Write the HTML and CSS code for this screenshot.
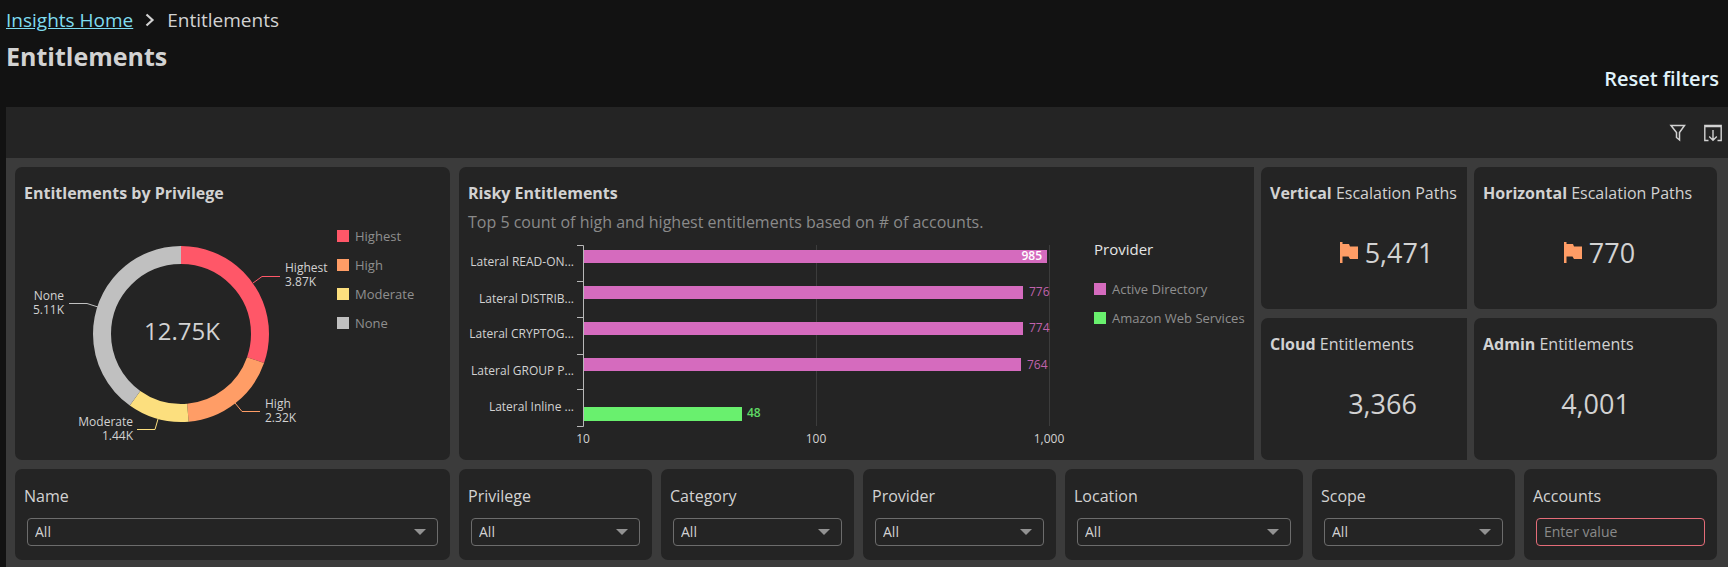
FILE: index.html
```html
<!DOCTYPE html>
<html lang="en">
<head>
<meta charset="utf-8">
<title>Entitlements</title>
<link rel="stylesheet" href="styles.css">
</head>
<body>
<header class="page-header">
  <nav class="breadcrumb" aria-label="Breadcrumb">
    <a class="breadcrumb-link" href="#">Insights Home</a>
    <svg class="breadcrumb-chevron" width="10" height="14" viewBox="0 0 10 14" aria-hidden="true"><path d="M1.5 1.5 7.5 7l-6 5.5" fill="none" stroke="currentColor" stroke-width="2.2"/></svg>
    <span>Entitlements</span>
  </nav>
  <h1 class="page-title">Entitlements</h1>
  <button class="reset" type="button">Reset filters</button>
</header>

<main class="report">
  <div class="toolbar">
    <button class="tool" type="button" aria-label="Filter">
      <svg width="18" height="18" viewBox="0 0 18 18" aria-hidden="true"><path d="M2 1.5h13.500L10.500 8.500v7.500L7.500 13.500v-5z" fill="none" stroke="currentColor" stroke-width="1.500"/></svg>
    </button>
    <button class="tool" type="button" aria-label="Export">
      <svg width="18" height="18" viewBox="0 0 18 18" aria-hidden="true"><path d="M4.500 16.500H.8V1.500h16.400v15h-3.700M.8 2.500h16.400M9 6v10M5.200 12.500 9 16.300l3.800-3.800" fill="none" stroke="currentColor" stroke-width="1.400"/></svg>
    </button>
  </div>

  <div class="canvas">
    <div class="row charts">
      <section class="card">
        <h2 class="card-title">Entitlements by Privilege</h2>
        <div class="donut-body">
          <svg class="donut" width="305" height="216" viewBox="0 0 305 216" role="img" aria-label="Entitlements by privilege">
            <g transform="rotate(-90 157 104)" fill="none" stroke-width="18">
              <circle cx="157" cy="104" r="79" pathLength="1274" stroke="#ff5768" stroke-dasharray="387 887"/>
              <circle cx="157" cy="104" r="79" pathLength="1274" stroke="#ff9d66" stroke-dasharray="232 1042" stroke-dashoffset="-387"/>
              <circle cx="157" cy="104" r="79" pathLength="1274" stroke="#fcdf7e" stroke-dasharray="144 1130" stroke-dashoffset="-619"/>
              <circle cx="157" cy="104" r="79" pathLength="1274" stroke="#c0c0c0" stroke-dasharray="511 763" stroke-dashoffset="-763"/>
            </g>
            <g class="leader">
              <path d="M229 53l9-6.500h18" stroke="#ff5768"/>
              <path d="M211 173l7 8.500h18" stroke="#ff9d66"/>
              <path d="M134 189l-3 10.500h-18" stroke="#fcdf7e"/>
              <path d="M74 77l-11-3.500H45" stroke="#c0c0c0"/>
            </g>
            <text class="donut-total" x="158" y="110" text-anchor="middle">12.75K</text>
            <g class="chart-label">
              <text x="261" y="42">Highest</text><text x="261" y="56">3.87K</text>
              <text x="241" y="178">High</text><text x="241" y="192">2.32K</text>
              <text x="109" y="196" text-anchor="end">Moderate</text><text x="109" y="210" text-anchor="end">1.44K</text>
              <text x="40" y="70" text-anchor="end">None</text><text x="40" y="84" text-anchor="end">5.11K</text>
            </g>
          </svg>
          <ul class="legend">
            <li class="legend-item"><span class="swatch highest"></span>Highest</li>
            <li class="legend-item"><span class="swatch high"></span>High</li>
            <li class="legend-item"><span class="swatch moderate"></span>Moderate</li>
            <li class="legend-item"><span class="swatch none"></span>None</li>
          </ul>
        </div>
      </section>

      <div class="metrics">
        <section class="card clipped">
          <h2 class="card-title">Risky Entitlements</h2>
          <p class="card-note">Top 5 count of high and highest entitlements based on # of accounts.</p>
          <div class="bars-body">
            <svg class="bars" width="606" height="206" viewBox="0 0 606 206" role="img" aria-label="Risky entitlements by number of accounts">
              <path d="M348.500 5v181M581.500 5v181" stroke="#3c3c3c"/>
              <g fill="#d56bbe">
                <rect x="116" y="10" width="463" height="13"/>
                <rect x="116" y="46" width="439" height="13"/>
                <rect x="116" y="82" width="439" height="13"/>
                <rect x="116" y="118" width="437" height="13"/>
              </g>
              <rect x="116" y="167" width="158" height="14" fill="#69f06e"/>
              <path d="M109 5.500h6.500v181H109M109 41.500h6M109 77.500h6M109 114.500h6M109 149.500h6" fill="none" stroke="#b8b8b8"/>
              <g class="chart-label" text-anchor="end">
                <text x="106" y="26">Lateral READ-ON...</text>
                <text x="106" y="63">Lateral DISTRIB...</text>
                <text x="106" y="98">Lateral CRYPTOG...</text>
                <text x="106" y="135">Lateral GROUP P...</text>
                <text x="106" y="171">Lateral Inline ...</text>
              </g>
              <g class="axis-label" text-anchor="middle">
                <text x="115" y="203">10</text><text x="348" y="203">100</text><text x="581" y="203">1,000</text>
              </g>
              <g class="bar-value">
                <text x="574" y="20" text-anchor="end" class="value-inside">985</text>
                <text x="561" y="56">776</text><text x="561" y="92">774</text><text x="559" y="129">764</text>
                <text x="279" y="177" class="value-aws">48</text>
              </g>
            </svg>
            <div class="provider-legend">
              <h3 class="legend-title">Provider</h3>
              <ul class="legend">
                <li class="legend-item"><span class="swatch ad"></span>Active Directory</li>
                <li class="legend-item"><span class="swatch aws"></span>Amazon Web Services</li>
              </ul>
            </div>
          </div>
        </section>

        <div class="kpi-column cut">
          <section class="card kpi clipped">
            <h2 class="kpi-title"><b>Vertical</b> Escalation Paths</h2>
            <p class="kpi-value"><svg class="flag" width="18" height="22" viewBox="0 0 18 22" aria-hidden="true"><path d="M0 0h2.500v2H9l1 2.500H18V17h-8l-1.500-2.500H2.500V21H0z" fill="#ff9d66"/></svg>5,471</p>
          </section>
          <section class="card kpi clipped">
            <h2 class="kpi-title"><b>Cloud</b> Entitlements</h2>
            <p class="kpi-value">3,366</p>
          </section>
        </div>
        <div class="kpi-column">
          <section class="card kpi">
            <h2 class="kpi-title"><b>Horizontal</b> Escalation Paths</h2>
            <p class="kpi-value"><svg class="flag" width="18" height="22" viewBox="0 0 18 22" aria-hidden="true"><path d="M0 0h2.500v2H9l1 2.500H18V17h-8l-1.500-2.500H2.500V21H0z" fill="#ff9d66"/></svg>770</p>
          </section>
          <section class="card kpi">
            <h2 class="kpi-title"><b>Admin</b> Entitlements</h2>
            <p class="kpi-value">4,001</p>
          </section>
        </div>
      </div>
    </div>

    <form class="row filters">
      <div class="card filter"><label class="filter-label" for="f-name">Name</label><div class="select-wrap"><select class="field" id="f-name"><option>All</option></select></div></div>
      <div class="card filter"><label class="filter-label" for="f-privilege">Privilege</label><div class="select-wrap"><select class="field" id="f-privilege"><option>All</option></select></div></div>
      <div class="card filter"><label class="filter-label" for="f-category">Category</label><div class="select-wrap"><select class="field" id="f-category"><option>All</option></select></div></div>
      <div class="card filter"><label class="filter-label" for="f-provider">Provider</label><div class="select-wrap"><select class="field" id="f-provider"><option>All</option></select></div></div>
      <div class="card filter"><label class="filter-label" for="f-location">Location</label><div class="select-wrap"><select class="field" id="f-location"><option>All</option></select></div></div>
      <div class="card filter"><label class="filter-label" for="f-scope">Scope</label><div class="select-wrap"><select class="field" id="f-scope"><option>All</option></select></div></div>
      <div class="card filter"><label class="filter-label" for="f-accounts">Accounts</label><input class="field invalid" id="f-accounts" type="text" placeholder="Enter value"></div>
    </form>
  </div>
</main>
</body>
</html>
```
FILE: styles.css
```css
* { box-sizing: border-box; }

body {
  margin: 0;
  background: #121212;
  color: #d2d2d2;
  font-family: "Open Sans", "Noto Sans", sans-serif;
}

h1, h2, h3, p, ul { margin: 0; padding: 0; }
ul { list-style: none; }

button {
  padding: 0;
  border: 0;
  background: none;
  color: inherit;
  font: inherit;
  cursor: pointer;
}

.page-header {
  display: flex;
  flex-direction: column;
  padding: 8px 9px 16px 6px;
}

.breadcrumb {
  display: flex;
  align-items: center;
  gap: 12px;
  font-size: 19px;
  line-height: 24px;
}
.breadcrumb-link { color: #7fdcf0; }

.page-title {
  margin-top: 8px;
  font-size: 25px;
  font-weight: 700;
  line-height: 32px;
}

.reset {
  align-self: flex-end;
  margin-top: -5px;
  color: #e0f3fb;
  font-size: 20px;
  font-weight: 600;
  line-height: 24px;
}

.report { margin-left: 6px; }

.toolbar {
  display: flex;
  align-items: center;
  justify-content: flex-end;
  gap: 17px;
  height: 51px;
  padding-right: 6px;
  background: #242424;
}
.tool { display: flex; }

.canvas {
  display: flex;
  flex-direction: column;
  gap: 9px;
  min-height: calc(100vh - 158px);
  padding: 9px 11px 7px 9px;
  background: #3b3b3b;
}

.row { display: grid; gap: 9px; }
.charts { grid-template-columns: minmax(0, 435fr) minmax(0, 1258fr); }
.metrics {
  display: grid;
  grid-template-columns: minmax(0, 795fr) minmax(0, 206fr) minmax(0, 243fr);
  gap: 7px;
}
.kpi-column { display: grid; grid-auto-rows: 1fr; gap: 9px; }

.card {
  min-width: 0;
  padding: 15px 9px 14px;
  border-radius: 7px;
  background: #242424;
}
.clipped { border-radius: 7px 0 0 7px; }

.card-title {
  font-size: 16px;
  font-weight: 700;
  line-height: 22px;
  white-space: nowrap;
}
.card-note {
  margin-top: 7px;
  color: #8a8a8a;
  font-size: 16px;
  line-height: 22px;
  white-space: nowrap;
}

.donut-body { display: flex; gap: 8px; margin-top: 26px; }
.donut, .bars { flex: none; }
.donut-total { fill: #d2d2d2; font-size: 24px; }
.leader { fill: none; stroke-width: 1; }
.chart-label { fill: #d2d2d2; font-size: 12px; }
.axis-label { fill: #d2d2d2; font-size: 12px; font-weight: 500; }

.legend {
  display: flex;
  flex-direction: column;
  gap: 9px;
  color: #8f8f8f;
  font-size: 13px;
  font-weight: 500;
  line-height: 20px;
  white-space: nowrap;
}
.donut-body .legend { margin-top: -4px; }
.legend-item { display: flex; align-items: center; gap: 6px; }
.swatch { width: 12px; height: 12px; }
.highest { background: #ff5768; }
.high { background: #ff9d66; }
.moderate { background: #fcdf7e; }
.none { background: #c0c0c0; }
.ad { background: #d56bbe; }
.aws { background: #69f06e; }

.bars-body { display: flex; gap: 20px; margin-top: 7px; }
.bar-value { fill: #c063ac; font-size: 12px; }
.value-inside { fill: #fff; font-weight: 600; }
.value-aws { fill: #5fd964; font-weight: 600; }
.legend-title {
  margin: -1px 0 20px;
  color: #e4e4e4;
  font-size: 15px;
  font-weight: 500;
  line-height: 20px;
}

.kpi { display: flex; flex-direction: column; gap: 32px; }
.kpi-title {
  font-size: 16px;
  font-weight: 400;
  line-height: 22px;
  white-space: nowrap;
}
.kpi-value {
  display: flex;
  align-items: center;
  justify-content: center;
  gap: 7px;
  font-size: 27px;
  line-height: 34px;
}
.cut .kpi-value { padding-left: 37px; }
.flag { margin-left: 8px; }

.filters {
  grid-template-columns:
    minmax(0, 435fr) minmax(0, 193fr) minmax(0, 193fr) minmax(0, 193fr)
    minmax(0, 238fr) minmax(0, 203fr) minmax(0, 193fr);
}
.filter {
  display: flex;
  flex-direction: column;
  gap: 11px;
  padding: 16px 12px 14px;
}
.filter-label {
  margin-left: -3px;
  font-size: 16px;
  line-height: 22px;
}
.select-wrap { position: relative; }
.select-wrap::after {
  content: "";
  position: absolute;
  top: 11px;
  right: 12px;
  border: 6px solid transparent;
  border-top-color: #929292;
  border-bottom: 0;
  pointer-events: none;
}
.field {
  display: block;
  width: 100%;
  height: 28px;
  padding: 0 7px 1px;
  border: 1px solid #6c6c6c;
  border-radius: 4px;
  appearance: none;
  background: transparent;
  color: #d2d2d2;
  font-family: inherit;
  font-size: 14px;
}
.invalid { border-color: #e46c78; }
.field::placeholder { color: #8a8a8a; }
```
